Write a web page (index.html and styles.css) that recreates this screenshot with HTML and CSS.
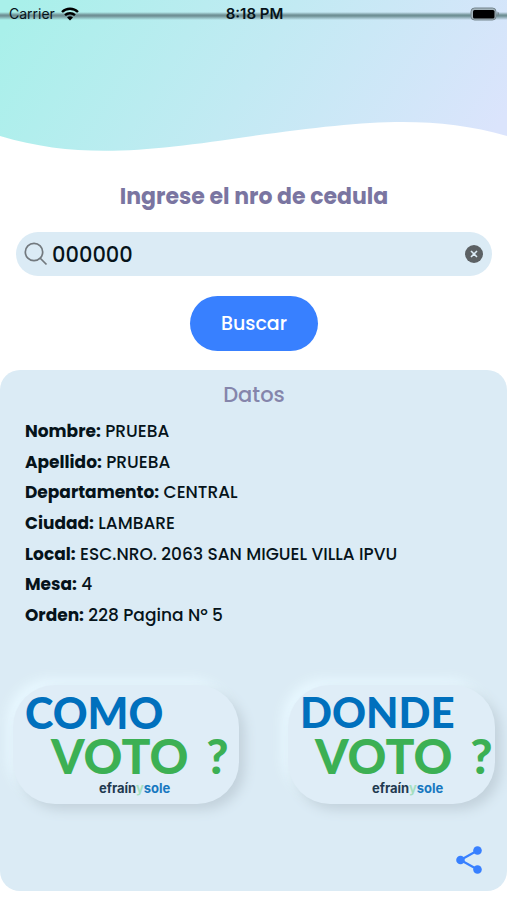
FILE: index.html
```html
<!DOCTYPE html>
<html lang="es">
<head>
    <meta charset="UTF-8">
    <meta name="viewport" content="width=device-width, initial-scale=1">
    <title>Consulta de padron</title>
    <link rel="stylesheet" href="styles.css">
</head>
<body>
    <header class="header">
        <svg class="wave" viewBox="0 0 507 151" preserveAspectRatio="none" aria-hidden="true">
            <defs>
                <linearGradient id="sky" gradientUnits="userSpaceOnUse" x1="40" y1="-30" x2="440" y2="220">
                    <stop offset="0" stop-color="#a9f0ea"/>
                    <stop offset="1" stop-color="#dbe4fc"/>
                </linearGradient>
            </defs>
            <path fill="url(#sky)" d="M0 0H507V136C430 114 362 121 253 136C150 151 80 160 0 136Z"/>
        </svg>
        <div class="status-bar">
            <span class="carrier">Carrier
                <svg width="18" height="14" viewBox="0 0 18 14" aria-hidden="true">
                    <path d="M1 5a11.500 11.500 0 0 1 16 0M4 8.200a7.500 7.500 0 0 1 10 0" fill="none" stroke="#000" stroke-width="2.400"/>
                    <path d="M9 13.500L6 10.500a4.500 4.500 0 0 1 6 0Z"/>
                </svg>
            </span>
            <span class="time">8:18 PM</span>
            <svg class="battery" width="30" height="14" viewBox="0 0 30 14" aria-hidden="true">
                <rect x="1" y="1" width="25" height="12" rx="3.500" fill="#a3b3bb" stroke="#75858d"/>
                <rect x="3" y="3" width="21.500" height="8.500" rx="1.500"/>
                <path d="M27.500 4.500v5c2-1 2-4 0-5Z" fill="#75858d"/>
            </svg>
        </div>
    </header>

    <main>
        <form class="search-form">
            <label class="title" for="cedula">Ingrese el nro de cedula</label>
            <div class="search-box">
                <svg width="24" height="24" viewBox="0 0 24 24" fill="none" stroke="#72797e" stroke-width="1.700" aria-hidden="true">
                    <circle cx="10" cy="10" r="8.700"/>
                    <path d="M16 16l6.500 6.500"/>
                </svg>
                <input type="text" id="cedula" value="000000">
                <button type="button" class="clear" aria-label="Borrar">
                    <svg width="18" height="18" viewBox="0 0 18 18">
                        <circle cx="9" cy="9" r="9" fill="#5c6164"/>
                        <path d="M6 6l6 6M12 6l-6 6" stroke="#dbebf5" stroke-width="1.600"/>
                    </svg>
                </button>
            </div>
            <button type="button" class="submit">Buscar</button>
        </form>

        <section class="card">
            <h2>Datos</h2>
            <ul class="datos">
                <li><b>Nombre:</b> PRUEBA</li>
                <li><b>Apellido:</b> PRUEBA</li>
                <li><b>Departamento:</b> CENTRAL</li>
                <li><b>Ciudad:</b> LAMBARE</li>
                <li><b>Local:</b> ESC.NRO. 2063 SAN MIGUEL VILLA IPVU</li>
                <li><b>Mesa:</b> 4</li>
                <li><b>Orden:</b> 228 Pagina Nº 5</li>
            </ul>

            <div class="options">
                <button type="button" class="option como">
                    <span class="blue">COMO</span>
                    <span class="green">VOTO <span>?</span></span>
                    <span class="brand">efraín<i>y</i><em>sole</em></span>
                </button>
                <button type="button" class="option donde">
                    <span class="blue">DONDE</span>
                    <span class="green">VOTO <span>?</span></span>
                    <span class="brand">efraín<i>y</i><em>sole</em></span>
                </button>
            </div>

            <button type="button" class="share" aria-label="Compartir">
                <svg width="26" height="28" viewBox="0 0 26 28" fill="#3880ff">
                    <path d="M21.500 4.500L4.500 14l17 9.500" fill="none" stroke="#3880ff" stroke-width="2.200"/>
                    <circle cx="21.500" cy="4.500" r="4.300"/>
                    <circle cx="4.500" cy="14" r="4.300"/>
                    <circle cx="21.500" cy="23.500" r="4.300"/>
                </svg>
            </button>
        </section>
    </main>
</body>
</html>
```
FILE: styles.css
```css
* {
    box-sizing: border-box;
}

body {
    margin: 0;
    background-color: #fff;
    color: #06131a;
    font-family: Poppins, Inter, sans-serif;
}

button {
    border: none;
    padding: 0;
    font-family: inherit;
    cursor: pointer;
}

svg {
    display: block;
}

.header {
    display: grid;
}

.wave {
    grid-area: 1 / 1;
    width: 100%;
    height: 151px;
}

.status-bar {
    grid-area: 1 / 1;
    display: grid;
    grid-template-columns: 1fr auto 1fr;
    align-items: center;
    align-self: start;
    height: 27px;
    padding: 0 7px 0 9px;
    font-family: Inter, sans-serif;
    font-size: 14px;
    background: linear-gradient(transparent 12px, #6f9095 15px, #6f9095 16px, transparent 20px);
}

.carrier {
    display: flex;
    align-items: center;
    gap: 6px;
}

.time {
    font-size: 15px;
    font-weight: 600;
}

.battery {
    justify-self: end;
}

/* busqueda */
.search-form {
    display: flex;
    flex-direction: column;
    align-items: center;
    padding: 30px 15px 19px 16px;
}

.title {
    color: #7a75a1;
    font-size: 22px;
    font-weight: 700;
    line-height: 32px;
}

.search-box {
    display: flex;
    align-items: center;
    gap: 4px;
    width: 100%;
    height: 44px;
    margin: 19px 0 20px;
    padding: 0 9px 0 8px;
    border-radius: 22px;
    background-color: #dbebf5;
}

.search-box input {
    flex: 1;
    min-width: 0;
    border: none;
    padding: 0;
    background: none;
    color: #06131a;
    font-family: inherit;
    font-size: 21px;
    font-weight: 500;
    outline: none;
}

.clear {
    background: none;
}

.submit {
    width: 128px;
    height: 55px;
    border-radius: 28px;
    background-color: #3880ff;
    color: #fff;
    font-size: 19px;
    font-weight: 500;
}

/* datos */
.card {
    display: flex;
    flex-direction: column;
    padding: 9px 12px 17px 13px;
    border-radius: 20px;
    background-color: #dbebf5;
}

.card h2 {
    margin: 0 0 5px;
    color: #8585ab;
    font-size: 21px;
    font-weight: 500;
    line-height: 32px;
    text-align: center;
}

.datos {
    display: grid;
    grid-auto-rows: 1fr;
    align-items: center;
    list-style: none;
    min-height: 214px;
    margin: 0;
    padding: 0 12px;
    font-size: 17px;
    font-weight: 500;
    line-height: 28px;
}

.datos b {
    font-weight: 700;
}

.options {
    display: grid;
    grid-template-columns: 226fr 207fr;
    gap: 49px;
    margin: 55px 0 42px;
}

.option {
    display: flex;
    flex-direction: column;
    height: 119px;
    padding: 6px 0 0 12px;
    border-radius: 42px;
    background-color: #dfedf7;
    box-shadow: 6px 6px 12px #c3d2dc, -6px -6px 12px #e8f8ff;
    font-family: Lato, sans-serif;
    font-weight: 900;
    text-align: left;
    white-space: nowrap;
}

.blue {
    color: #0070bd;
    font-size: 43px;
    line-height: 43px;
}

.donde .blue {
    font-size: 42px;
}

.green {
    display: flex;
    gap: 18px;
    padding-left: 26px;
    color: #3cb054;
    font-size: 48px;
    line-height: 43px;
}

.donde .green {
    padding-left: 15px;
}

.brand {
    margin-top: 2px;
    padding-left: 74px;
    color: #1f3a50;
    font-family: Inter, sans-serif;
    font-size: 13px;
    font-weight: 700;
    line-height: 18px;
}

.donde .brand {
    padding-left: 72px;
}

.brand i {
    color: #a5dfbf;
    font-style: normal;
}

.brand em {
    color: #1878c0;
    font-style: normal;
}

.share {
    align-self: flex-end;
    margin-right: 13px;
    background: none;
}
```
